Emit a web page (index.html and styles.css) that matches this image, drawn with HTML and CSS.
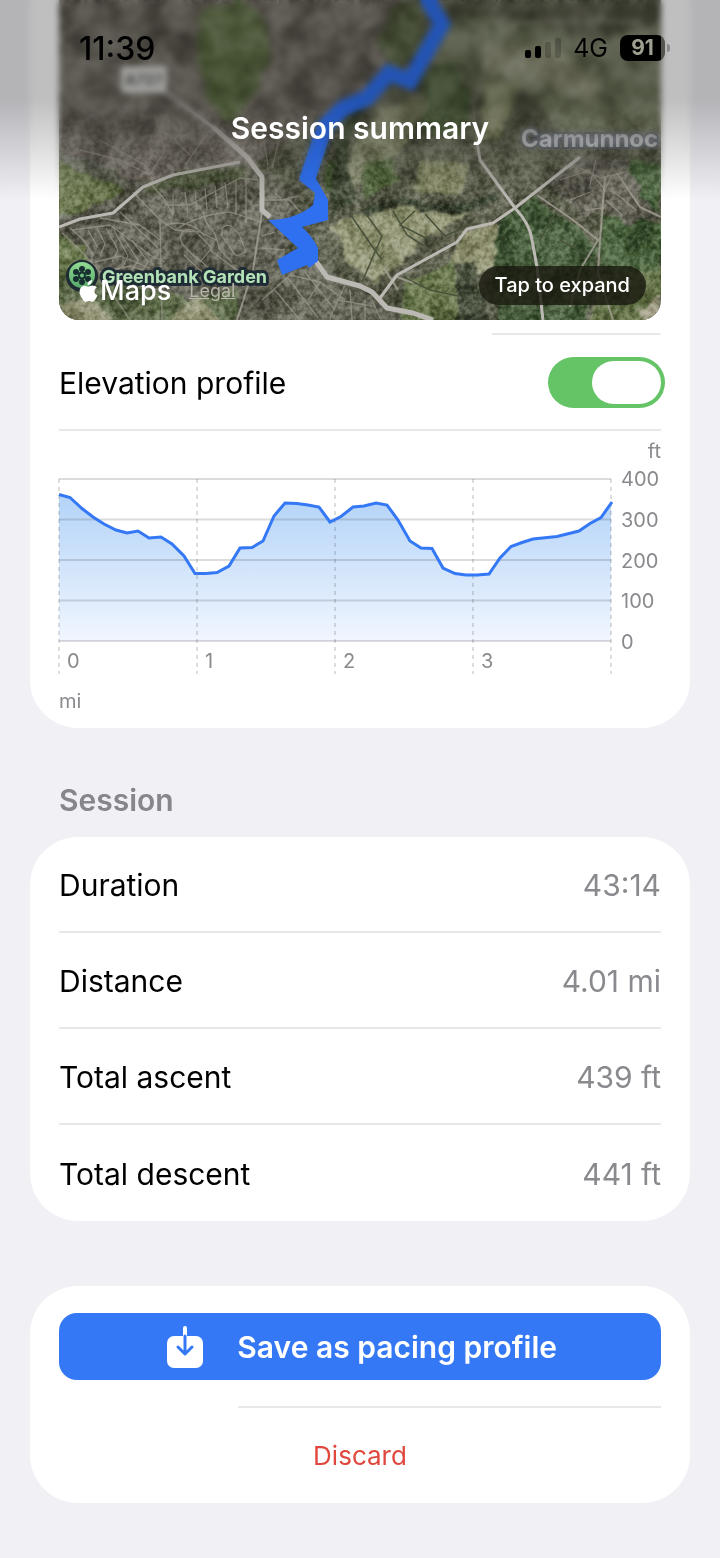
FILE: index.html
```html
<!DOCTYPE html>
<html lang="en">
<head>
  <meta charset="UTF-8">
  <meta name="viewport" content="width=device-width, initial-scale=1.0">
  <title>Session summary</title>
  <link rel="stylesheet" href="styles.css">
</head>
<body>
  <header class="topbar">
    <div class="statusbar">
      <span class="clock">11:39</span>
      <div class="status-icons">
        <svg class="signal" width="36" height="20" viewBox="0 0 36 20" aria-hidden="true">
          <rect x="0" y="12" width="6" height="8" rx="2"/>
          <rect x="10" y="8" width="6" height="12" rx="2"/>
          <rect class="signal-off" x="20" y="4" width="6" height="16" rx="2"/>
          <rect class="signal-off" x="30" y="0" width="6" height="20" rx="2"/>
        </svg>
        <span class="network">4G</span>
        <span class="battery">91</span>
      </div>
    </div>
    <h1>Session summary</h1>
  </header>

  <main>
    <section class="card card-map">
      <div class="map">
        <svg class="map-image" viewBox="59 0 602 320" preserveAspectRatio="xMidYMid slice" role="img" aria-label="Route map">
          <defs>
            <!-- rough edges for fields and woods -->
            <filter id="rough" x="-5%" y="-5%" width="110%" height="110%" color-interpolation-filters="sRGB">
              <feTurbulence type="fractalNoise" baseFrequency="0.06" numOctaves="3" seed="4" result="n"/>
              <feDisplacementMap in="SourceGraphic" in2="n" scale="12" xChannelSelector="R" yChannelSelector="G"/>
              <feGaussianBlur stdDeviation="1"/>
            </filter>
            <filter id="grain" x="0" y="0" width="100%" height="100%" color-interpolation-filters="sRGB">
              <feTurbulence type="fractalNoise" baseFrequency="0.2" numOctaves="4" seed="9"/>
              <feColorMatrix type="matrix" values="2.4 0 0 0 -0.65  2.4 0 0 0 -0.65  2.4 0 0 0 -0.65  0 0 0 0 1"/>
            </filter>
            <filter id="patches" x="0" y="0" width="100%" height="100%" color-interpolation-filters="sRGB">
              <feTurbulence type="fractalNoise" baseFrequency="0.035" numOctaves="4" seed="21"/>
              <feColorMatrix type="matrix" values="3 0 0 0 -0.9  3 0 0 0 -0.9  3 0 0 0 -0.9  0 0 0 0 1"/>
            </filter>
            <linearGradient id="pin" x1="0" y1="0" x2="0" y2="1">
              <stop offset="0" stop-color="#92dc94"/>
              <stop offset="1" stop-color="#55a869"/>
            </linearGradient>
          </defs>

          <rect x="59" y="0" width="602" height="320" fill="#555745"/>
          <g filter="url(#rough)">
            <path fill="#69645b" d="M50-10H430L405 60 330 110 255 165 190 175 150 190 50 150Z"/>
            <path fill="#5b6b41" d="M200 10 240 0 265 20 270 60 255 90 232 125 212 105 198 65Z"/>
            <path fill="#66685b" d="M50 150 110 168 140 185 115 210 55 222Z"/>
            <path fill="#5f6b42" d="M55 160 95 178 125 188 112 208 55 215Z"/>
            <path fill="#5b5a4e" d="M55 225 145 180 265 170 300 200 262 330H180L90 290Z"/>
            <path fill="#485036" d="M150 182 190 170 245 165 250 178 200 186 145 192Z"/>
            <path fill="#66754a" d="M55 235 85 245 90 275 58 282Z"/>
            <path fill="#566442" d="M55 282H130L190 300 240 290 235 325H55Z"/>
            <path fill="#898a6b" d="M62 305 90 298 115 325H62ZM180 305 200 298 225 325H170Z"/>
            <path fill="#566040" d="M395 5 430 0 420 50 395 70 375 40Z"/>
            <path fill="#6c7258" d="M450 15 520 20 590 40 661 25V130L560 135 530 90 450 90 430 60Z"/>
            <path fill="#8a8c72" d="M485 45 545 40 600 85 590 100 560 90 510 75 480 70Z"/>
            <path fill="#4c5c3a" d="M425 75 450 60 475 100 460 140 420 130Z"/>
            <path fill="#7c7f62" d="M380 110 415 95 430 105 400 150 375 170 355 190 345 165Z"/>
            <path fill="#4b5d36" d="M362 165 390 155 400 180 365 200ZM325 160 345 165 345 190 325 195Z"/>
            <path fill="#3a432f" d="M340 115 360 110 345 165 360 200 335 215 330 190Z"/>
            <path fill="#7f8361" d="M485 85 520 80 500 140 480 140ZM420 160 470 165 460 195 415 190Z"/>
            <path fill="#8e9170" d="M330 225 365 212 395 210 415 200 470 212 425 240 400 265 375 282 350 265Z"/>
            <path fill="#8f9170" d="M465 232 500 222 495 265 475 278 450 260Z"/>
            <path fill="#3e5433" d="M500 220 535 197 600 245 585 325H500L490 285Z"/>
            <path fill="#405833" d="M600 215 661 225V275H600ZM625 160 661 165V210L640 205Z"/>
            <path fill="#5e6d42" d="M405 280 455 260 460 285 475 300 460 325H400ZM600 275 661 270V325H590Z"/>
            <path fill="#343c2b" d="M360 208 400 198 460 205 500 190 500 200 460 215 400 207 362 216Z"/>
            <path fill="#3d4432" d="M460 265 475 262 490 325H455Z"/>
            <path fill="#5e5f50" d="M262 270 315 262 345 280 400 315 400 330H240Z"/>
            <path fill="#636156" d="M580 155 625 155 640 195 660 215 630 225 600 205 585 220 560 195 550 185Z"/>
            <path fill="#a09c84" d="M640 312 661 296V320H645Z"/>
          </g>
          <rect class="map-patches" x="59" y="0" width="602" height="320" filter="url(#patches)"/>
          <rect class="map-grain" x="59" y="0" width="602" height="320" filter="url(#grain)"/>

          <!-- hedgerows -->
          <path class="hedge" d="M350 214 372 246 382 260M362 282 382 236 366 214M393 211 407 235 424 246M415 211 400 225 440 245M425 214 445 236 470 225M405 278 430 290 458 296M560 205 540 240M560 240 600 262"/>

          <!-- residential streets -->
          <g class="streets">
            <path d="M133 192 160 220 175 230Q200 214 230 212L262 222M120 212 155 245 162 252M100 218 140 225 160 240M72 230 110 225 150 255 165 262"/>
            <path d="M150 183 165 200 173 215M165 205 190 205 240 178 258 180M173 195V215M185 192 188 213M195 190 197 211M205 188 207 210M215 186 217 208M225 182 228 208M236 180V215M246 178V222M160 220 162 320M175 230 200 232 216 240"/>
            <path d="M203 212 206 222 215 234 220 250 232 262M180 238Q184 224 196 232L212 248 200 262 182 244ZM222 228Q230 220 240 236L246 252 236 256 222 236Z"/>
            <path d="M165 225Q190 218 205 236M184 255 210 280M196 256 225 285M210 250 250 280M262 248 285 250M262 236 275 232M262 200H290L300 212M275 193 282 200 298 196"/>
            <path d="M80 236 92 252 92 266 112 280 160 290M88 230 98 248M97 228 105 244 100 256M106 228 118 250 112 262M114 230 128 256 122 268M122 236 138 260 132 270M132 240 148 262 142 272M95 262 120 256 150 268M100 272 130 266 158 274"/>
            <path d="M62 233 80 250 98 270 110 290 130 320M70 228 86 242"/>
            <path d="M262 300 290 275 320 282 345 300M275 290 300 320M288 278 318 318M305 272 335 310M320 282 308 300M345 285 330 318M350 290 352 320M338 300 372 306M365 300V320M380 318 372 300"/>
            <path d="M593 175 605 190 612 175M580 168 600 178 625 172M585 210 604 208M610 190 625 200M618 195 636 210M560 180 590 170M596 160 590 185M570 200 590 192M606 200 622 215"/>
            <path d="M80 150 120 160 150 175M100 140 145 165M155 115 165 150 150 175M190 155 170 135 155 130M210 130 185 165M262 130 268 165M285 115 272 168"/>
          </g>
          <!-- lanes -->
          <path class="lane" d="M537 195 573 220 598 240 580 270 570 307M605 177 600 240 598 273 613 320M617 173 640 207 661 217M262 212 253 270 237 320M83 0 75 25 60 42M278 0 276 75 245 110M500 35 520 22H640M413 283 395 276M384 268 398 290"/>
          <path class="lane" d="M60 58 120 66M500 0 485 23 490 57 473 103 477 143"/>
          <!-- main roads -->
          <path class="road" d="M477 143 480 160 515 208Q530 224 532 240L537 267 543 320M580 157 515 208 493 223 467 229 457 242 397 275 380 298M59 227 80 219 113 213 143 187 173 175 240 162M165 92 213 127 247 157"/>
          <path class="road road-wide" d="M213 127 247 157 262 177V210L270 217M315 260 327 277 360 286 372 292 387 308 413 313 433 320"/>

          <!-- recorded route -->
          <path class="route-line" d="M426-8 429 2 442 24 410 81 389 73 367 98 343 108 325 126 307 180"/>
          <path class="route-end" d="M299 180 315 193 313 205Q295 220 268 220L298 248 277 260 282 275 307 265 309 268 318 261V248Q312 236 302 227L328 220V200L318 182 306 165Z"/>

          <rect x="121" y="66" width="46" height="27" rx="4" fill="#d8d8d4"/>
          <text class="road-sign" x="144" y="85">A727</text>
          <text class="place" x="521" y="147">Carmunnoc</text>

          <g>
            <circle cx="82" cy="276" r="16" fill="#1f2b33"/>
            <circle cx="82" cy="275" r="13" fill="url(#pin)"/>
            <g fill="#17302f">
              <circle cx="82" cy="269" r="3"/>
              <circle cx="88" cy="272" r="3"/>
              <circle cx="88" cy="279" r="3"/>
              <circle cx="82" cy="282" r="3"/>
              <circle cx="76" cy="279" r="3"/>
              <circle cx="76" cy="272" r="3"/>
              <circle cx="82" cy="275.500" r="4"/>
            </g>
            <circle cx="82" cy="275.500" r="2" fill="#6fc17e"/>
            <text class="poi" x="102" y="283">Greenbank Garden</text>
          </g>
        </svg>
        <div class="map-credit">
          <svg width="19" height="22" viewBox="0 0 19 22" aria-hidden="true">
            <path fill="#fff" d="M13 0c.2 1.400-.4 2.700-1.200 3.600-.8 1-2 1.600-3.200 1.500-.2-1.300.4-2.600 1.200-3.500C10.600.700 11.900.100 13 0ZM17.800 7.400c-1.500.9-2.300 2.200-2.300 3.800 0 1.900 1.100 3.400 2.900 4.100-.5 1.500-1.200 2.900-2.200 4.200-.8 1.100-1.600 2.200-2.900 2.200-1.300 0-1.700-.8-3.300-.8-1.500 0-2 .8-3.300.8s-2.200-1.200-3-2.400C1.900 16.800.6 14.400.6 11.700.6 8 3 5.700 5.700 5.700c1.500 0 2.600.9 3.700.9 1 0 2.300-1 4.100-1 1.700 0 3.300.7 4.300 1.800Z"/>
          </svg>
          <span class="map-brand">Maps</span>
          <a class="legal" href="#legal">Legal</a>
        </div>
        <button class="expand" type="button">Tap to expand</button>
      </div>

      <div class="toggle-row">
        <label for="elevation">Elevation profile</label>
        <input class="switch" type="checkbox" role="switch" id="elevation" checked>
      </div>

      <div class="chart">
        <div class="unit-y">ft</div>
        <div class="plot">
          <svg class="plot-area" viewBox="0 0 552 195" preserveAspectRatio="none" role="img" aria-label="Elevation by distance">
            <defs>
              <linearGradient id="area" x1="0" y1="0" x2="0" y2="1">
                <stop offset="0" stop-color="#b3d3f8"/>
                <stop offset="1" stop-color="#f1f6fe"/>
              </linearGradient>
            </defs>
            <path fill="url(#area)" d="M0 15.500 11 18.500 23 29.500 34 38 45 45 57 51 68 54 79 52 90 59 102 58 113 65 125 77 136 94.500H147L158 93.500 170 87 181 69 193 68.500 204 62 215 37 226 24 238 24.500 249 26 260 28 271 43 282 37.500 294 28 305 27 317 24 328 26 339 41 351 62 362 69 373 69.500 384 89 396 94.500 407 96H418L430 95 441 79 452 67.500 463 63.500 474 60 498 57.500 508 55 520 52 531 44.500 542 38.500 552 24V162H0Z"/>
            <path class="grid-line" d="M0 0H552M0 40.500H552M0 81H552M0 121.500H552M0 162H552"/>
            <path class="tick-line" d="M0 0V195M138 0V195M276 0V195M414 0V195M552 0V195"/>
            <path class="elevation-line" d="M0 15.500 11 18.500 23 29.500 34 38 45 45 57 51 68 54 79 52 90 59 102 58 113 65 125 77 136 94.500H147L158 93.500 170 87 181 69 193 68.500 204 62 215 37 226 24 238 24.500 249 26 260 28 271 43 282 37.500 294 28 305 27 317 24 328 26 339 41 351 62 362 69 373 69.500 384 89 396 94.500 407 96H418L430 95 441 79 452 67.500 463 63.500 474 60 498 57.500 508 55 520 52 531 44.500 542 38.500 553 23"/>
          </svg>
          <div class="x-axis"><span>0</span><span>1</span><span>2</span><span>3</span></div>
        </div>
        <div class="y-axis"><span>400</span><span>300</span><span>200</span><span>100</span><span>0</span></div>
        <div class="unit-x">mi</div>
      </div>
    </section>

    <h2>Session</h2>
    <dl class="card stats">
      <div class="stat"><dt>Duration</dt><dd>43:14</dd></div>
      <div class="stat"><dt>Distance</dt><dd>4.01 mi</dd></div>
      <div class="stat"><dt>Total ascent</dt><dd>439 ft</dd></div>
      <div class="stat"><dt>Total descent</dt><dd>441 ft</dd></div>
    </dl>

    <section class="card actions">
      <button class="save" type="button">
        <svg width="36" height="42" viewBox="0 0 36 42" aria-hidden="true">
          <rect x="0" y="10" width="36" height="32" rx="7" fill="#fff"/>
          <path d="M18 2V10" stroke="#fff" stroke-width="4" stroke-linecap="round"/>
          <path d="M18 10V27M11 21 18 28 25 21" fill="none" stroke="#3478f6" stroke-width="3" stroke-linecap="round" stroke-linejoin="round"/>
        </svg>
        <span>Save as pacing profile</span>
      </button>
      <button class="discard" type="button">Discard</button>
    </section>
  </main>
</body>
</html>
```
FILE: styles.css
```css
* {
  box-sizing: border-box;
}
body {
  margin: 0;
  padding: 0 30px 54px;
  font-family: Inter, "Liberation Sans", sans-serif;
  font-size: 30px;
  background: #f1f0f5;
  color: #000;
}
button {
  border: none;
  padding: 0;
  font-family: inherit;
  cursor: pointer;
}

/* Header floats over the scrolled content */
.topbar {
  position: absolute;
  z-index: 2;
  top: 0;
  left: 0;
  right: 0;
  height: 200px;
}
.topbar::before {
  content: "";
  position: absolute;
  z-index: -1;
  inset: 0;
  background: rgba(0, 0, 0, 0.25);
  backdrop-filter: blur(3px);
  mask-image: linear-gradient(#000 50%, transparent);
}
.statusbar {
  display: flex;
  justify-content: space-between;
  align-items: center;
  height: 96px;
  padding: 0 55px 0 79px;
}
.clock {
  font-size: 32px;
  font-weight: 500;
}
.status-icons {
  display: flex;
  align-items: center;
  gap: 12px;
}
.signal-off {
  opacity: 0.2;
}
.network {
  font-size: 25px;
}
.battery {
  position: relative;
  width: 45px;
  border-radius: 8px;
  background: linear-gradient(90deg, #000 91%, #55554f 91%);
  color: #a0a092;
  font-size: 21px;
  font-weight: 700;
  line-height: 26px;
  text-align: center;
}
.battery::after {
  content: "";
  position: absolute;
  top: 9px;
  right: -5px;
  width: 3px;
  height: 8px;
  border-radius: 0 3px 3px 0;
  background: #88888a;
}
h1 {
  margin: 12px 0 0;
  color: #fff;
  font-size: 30px;
  font-weight: 600;
  line-height: 40px;
  text-align: center;
}

.card {
  margin: 0;
  padding: 0 29px;
  border-radius: 48px;
  background: #fff;
}
.card-map {
  border-radius: 0 0 48px 48px;
}

/* Map */
.map {
  position: relative;
  height: 320px;
  border-radius: 0 0 20px 20px;
  overflow: hidden;
}
.map-image {
  display: block;
  width: 100%;
  height: 100%;
}
.map-patches {
  mix-blend-mode: soft-light;
  opacity: 0.35;
}
.map-grain {
  mix-blend-mode: soft-light;
  opacity: 0.4;
}
.hedge {
  fill: none;
  stroke: #48523a;
  stroke-width: 1.5;
}
.streets {
  fill: none;
  stroke: #a29d93;
  stroke-width: 1.3;
  stroke-linejoin: round;
  opacity: 0.65;
}
.lane {
  fill: none;
  stroke: #a5a196;
  stroke-width: 2;
  stroke-linejoin: round;
  opacity: 0.8;
}
.road {
  fill: none;
  stroke: #bcb9b4;
  stroke-width: 3;
  stroke-linejoin: round;
}
.road-wide {
  stroke-width: 5;
}
.route-line {
  fill: none;
  stroke: #2f70f0;
  stroke-width: 16;
}
.route-end {
  fill: #2f70f0;
}
.road-sign {
  fill: #555;
  font-size: 15px;
  font-weight: 700;
  text-anchor: middle;
}
.place {
  fill: #ddd;
  stroke: #4c525b;
  stroke-width: 4;
  paint-order: stroke;
  font-size: 24px;
  font-weight: 700;
}
.poi {
  fill: #b5e3b8;
  stroke: #202c35;
  stroke-width: 6;
  stroke-linejoin: round;
  paint-order: stroke;
  font-size: 18px;
  font-weight: 700;
}
.map-credit {
  position: absolute;
  left: 20px;
  bottom: 14px;
  display: flex;
  align-items: center;
  gap: 2px;
  line-height: 30px;
}
.map-brand {
  color: #fff;
  font-size: 27px;
  font-weight: 500;
}
.legal {
  margin-left: 16px;
  color: #b5b4a9;
  font-size: 18px;
}
.expand {
  position: absolute;
  right: 15px;
  bottom: 15px;
  padding: 0 16px;
  border-radius: 20px;
  background: rgba(25, 25, 15, 0.8);
  color: #fff;
  font-size: 20px;
  font-weight: 500;
  line-height: 39px;
}

/* Elevation toggle */
.toggle-row {
  display: flex;
  justify-content: space-between;
  align-items: center;
  height: 98px;
  margin-top: 13px;
  padding-top: 3px;
  border-bottom: 2px solid #e8e8ea;
  background: linear-gradient(#e8e8ea, #e8e8ea) right top / 28% 2px no-repeat;
}
.switch {
  appearance: none;
  width: 117px;
  height: 51px;
  margin: 0 -4px 0 0;
  padding: 4px;
  border-radius: 26px;
  background: #c9c9cc;
  cursor: pointer;
}
.switch::before {
  content: "";
  display: block;
  width: 69px;
  height: 43px;
  border-radius: 22px;
  background: #fff;
}
.switch:checked {
  background: #65c466;
}
.switch:checked::before {
  margin-left: auto;
}

/* Elevation chart */
.chart {
  display: grid;
  grid-template-columns: 1fr 50px;
  color: #8a8a8e;
  font-size: 20px;
}
.unit-y {
  grid-column: 1 / -1;
  padding-top: 12px;
  line-height: 16px;
  text-align: right;
}
.plot {
  display: grid;
  padding-top: 20px;
}
.plot-area {
  grid-area: 1 / 1;
  display: block;
  width: 100%;
  height: 195px;
  overflow: visible;
}
.grid-line,
.tick-line,
.elevation-line {
  fill: none;
  vector-effect: non-scaling-stroke;
}
.grid-line {
  stroke: rgba(60, 60, 67, 0.18);
  stroke-width: 2;
}
.tick-line {
  stroke: rgba(60, 60, 67, 0.35);
  stroke-width: 1;
  stroke-dasharray: 4 4;
}
.elevation-line {
  stroke: #3478f6;
  stroke-width: 3;
}
.x-axis {
  grid-area: 1 / 1;
  align-self: end;
  display: grid;
  grid-template-columns: repeat(4, 1fr);
  line-height: 26px;
}
.x-axis span {
  padding-left: 8px;
}
.y-axis {
  display: flex;
  flex-direction: column;
  justify-content: space-between;
  height: 203px;
  padding-left: 10px;
  line-height: 40px;
}
.unit-x {
  line-height: 54px;
}

/* Session stats */
h2 {
  margin: 52px 29px 17px;
  color: #86868b;
  font-size: 30px;
  font-weight: 600;
  line-height: 40px;
}
.stat {
  display: flex;
  justify-content: space-between;
  align-items: center;
  height: 96px;
  padding-top: 2px;
  border-bottom: 2px solid #e8e8ea;
}
.stat:last-child {
  border-bottom: none;
}
dd {
  margin: 0;
  color: #8a8a8e;
}

/* Actions */
.actions {
  margin-top: 65px;
  padding-top: 27px;
}
.save {
  display: flex;
  align-items: center;
  width: 100%;
  height: 67px;
  padding-left: 18%;
  border-radius: 18px;
  background: #3478f6;
  color: #fff;
  font-size: 30px;
  font-weight: 600;
}
.save svg {
  margin-right: 34px;
}
.discard {
  width: 100%;
  height: 97px;
  margin-top: 26px;
  padding-top: 2px;
  background: linear-gradient(#e8e8ea, #e8e8ea) right top / 423px 2px no-repeat;
  color: #e0483e;
  font-size: 26px;
}
```
